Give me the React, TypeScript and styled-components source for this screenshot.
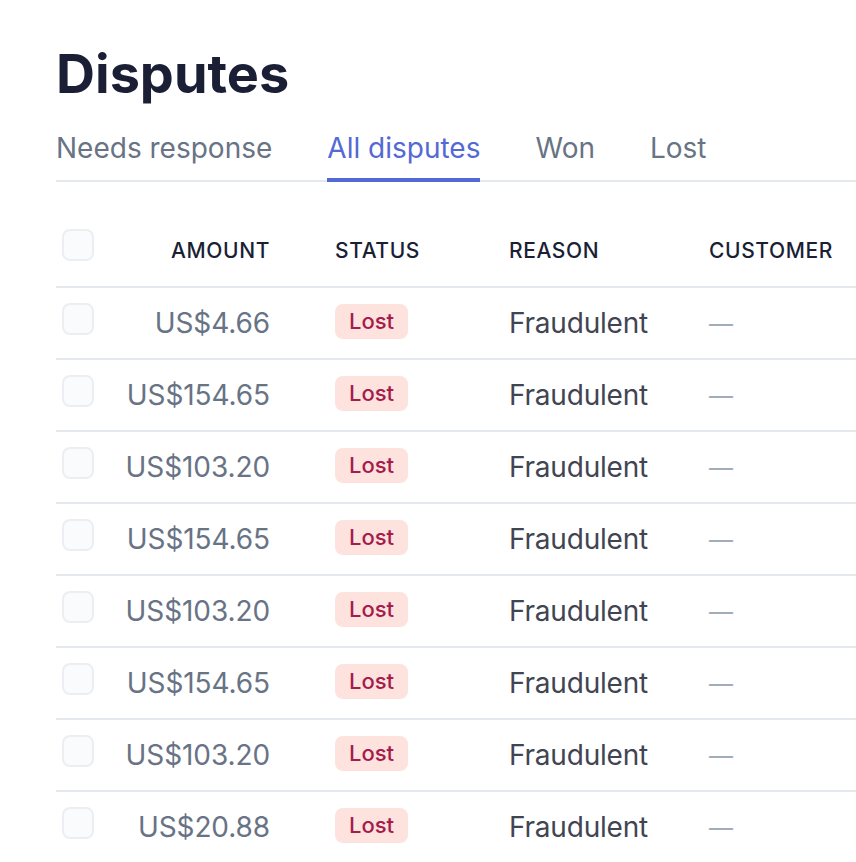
import React from "react";
import styled, { createGlobalStyle } from "styled-components";

const Global = createGlobalStyle`
  html, body { margin: 0; padding: 0; background: #ffffff; overflow: hidden; }
  body { font-family: Inter, "Noto Sans", sans-serif; -webkit-font-smoothing: antialiased; }
  * { box-sizing: border-box; }
`;

const Page = styled.div`
  padding: 41px 0 0 56px;
  width: 100%;
`;

const Title = styled.h1`
  margin: 0;
  font-size: 54px;
  line-height: 66px;
  font-weight: 700;
  color: #1a1f36;
  letter-spacing: 0px;
`;

const TabBar = styled.div`
  margin-top: 24px;
  display: flex;
  gap: 55px;
  border-bottom: 2px solid #e3e8ee;
`;

const Tab = styled.div<{ $active?: boolean }>`
  font-size: 28px;
  line-height: 34px;
  letter-spacing: 0px;
  padding-bottom: 13px;
  margin-bottom: -2px;
  color: ${(p) => (p.$active ? "#5469d4" : "#687385")};
  border-bottom: 4px solid ${(p) => (p.$active ? "#5469d4" : "transparent")};
`;

const Table = styled.div`
  margin-top: 32px;
  width: 100%;
`;

const Row = styled.div<{ $head?: boolean }>`
  display: grid;
  grid-template-columns: 32px 176px 239px 200px 1fr;
  align-items: center;
  height: ${(p) => (p.$head ? "74px" : "72px")};
  padding-left: 6px;
  border-bottom: 2px solid #e3e8ee;
`;

const Check = styled.div<{ $head?: boolean }>`
  width: 32px;
  height: 32px;
  border: 2px solid #ebeef2;
  background: #fafbfd;
  border-radius: 8px;
  transform: translateY(${(p) => (p.$head ? "-5px" : "-4px")});
`;

const HeadCell = styled.div<{ $right?: boolean; $pad?: number }>`
  font-size: 21px;
  font-weight: 500;
  letter-spacing: 0.6px;
  color: #1a1f36;
  white-space: nowrap;
  text-transform: uppercase;
  text-align: ${(p) => (p.$right ? "right" : "left")};
  padding-left: ${(p) => p.$pad ?? 0}px;
`;

const Amount = styled.div`
  font-size: 28px;
  color: #687385;
  text-align: right;
  letter-spacing: -0.1px;
`;

const StatusCell = styled.div`
  padding-left: 65px;
  display: flex;
  transform: translateY(-2px);
`;

const Badge = styled.span`
  display: inline-block;
  background: #fde2dd;
  color: #a41c4e;
  font-size: 22px;
  font-weight: 500;
  line-height: 27px;
  padding: 4px 14px;
  border-radius: 8px;
`;

const Text = styled.div`
  font-size: 28px;
  color: #414552;
  letter-spacing: -0.2px;
`;

const Dash = styled.div`
  font-size: 24px;
  color: #a3acb9;
`;

const amounts = [
  "US$4.66",
  "US$154.65",
  "US$103.20",
  "US$154.65",
  "US$103.20",
  "US$154.65",
  "US$103.20",
  "US$20.88",
];

export default function App() {
  return (
    <Page>
      <Global />
      <Title>Disputes</Title>
      <TabBar>
        <Tab>Needs response</Tab>
        <Tab $active>All disputes</Tab>
        <Tab>Won</Tab>
        <Tab>Lost</Tab>
      </TabBar>
      <Table>
        <Row $head>
          <Check $head />
          <HeadCell $right>Amount</HeadCell>
          <HeadCell $pad={65}>Status</HeadCell>
          <HeadCell>Reason</HeadCell>
          <HeadCell>Customer</HeadCell>
        </Row>
        {amounts.map((a, i) => (
          <Row key={i}>
            <Check />
            <Amount>{a}</Amount>
            <StatusCell>
              <Badge>Lost</Badge>
            </StatusCell>
            <Text>Fraudulent</Text>
            <Dash>—</Dash>
          </Row>
        ))}
      </Table>
    </Page>
  );
}
